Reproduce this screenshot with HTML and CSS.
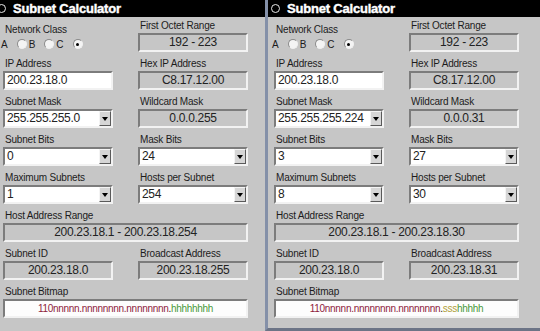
FILE: index.html
```html
<!DOCTYPE html>
<html lang="en">
  <head>
    <meta charset="UTF-8" />
    <meta name="viewport" content="width=device-width, initial-scale=1.0" />
    <title>Subnet Calculator</title>
    <link rel="stylesheet" href="styles.css">
  </head>
  <body>
    <div class="screens">
      <!-- class C, no subnetting -->
      <section class="calc calc-first">
        <div class="calc-title"><span class="calc-dot"></span>Subnet Calculator</div>
        <div class="calc-body">
          <div class="field net-class">
            <span class="label">Network Class</span>
            <div class="radios">
              <span>A</span><span class="radio"></span>
              <span>B</span><span class="radio"></span>
              <span>C</span><span class="radio checked"></span>
            </div>
          </div>
          <div class="field">
            <span class="label">First Octet Range</span>
            <div class="box">192 - 223</div>
          </div>

          <div class="field">
            <span class="label">IP Address</span>
            <div class="input">200.23.18.0</div>
          </div>
          <div class="field">
            <span class="label">Hex IP Address</span>
            <div class="box">C8.17.12.00</div>
          </div>

          <div class="field">
            <span class="label">Subnet Mask</span>
            <div class="select"><span>255.255.255.0</span><i class="arrow"></i></div>
          </div>
          <div class="field">
            <span class="label">Wildcard Mask</span>
            <div class="box">0.0.0.255</div>
          </div>

          <div class="field">
            <span class="label">Subnet Bits</span>
            <div class="select"><span>0</span><i class="arrow"></i></div>
          </div>
          <div class="field">
            <span class="label">Mask Bits</span>
            <div class="select"><span>24</span><i class="arrow"></i></div>
          </div>

          <div class="field">
            <span class="label">Maximum Subnets</span>
            <div class="select"><span>1</span><i class="arrow"></i></div>
          </div>
          <div class="field">
            <span class="label">Hosts per Subnet</span>
            <div class="select"><span>254</span><i class="arrow"></i></div>
          </div>

          <div class="field wide">
            <span class="label">Host Address Range</span>
            <div class="box">200.23.18.1 - 200.23.18.254</div>
          </div>

          <div class="field">
            <span class="label">Subnet ID</span>
            <div class="box">200.23.18.0</div>
          </div>
          <div class="field">
            <span class="label">Broadcast Address</span>
            <div class="box">200.23.18.255</div>
          </div>

          <div class="field wide">
            <span class="label">Subnet Bitmap</span>
            <div class="bitmap"><span class="bm-net">110nnnnn.nnnnnnnn.nnnnnnnn</span>.<span class="bm-host">hhhhhhhh</span></div>
          </div>
        </div>
      </section>

      <!-- class C, 3 subnet bits -->
      <section class="calc calc-second">
        <div class="calc-title"><span class="calc-dot"></span>Subnet Calculator</div>
        <div class="calc-body">
          <div class="field net-class">
            <span class="label">Network Class</span>
            <div class="radios">
              <span>A</span><span class="radio"></span>
              <span>B</span><span class="radio"></span>
              <span>C</span><span class="radio checked"></span>
            </div>
          </div>
          <div class="field">
            <span class="label">First Octet Range</span>
            <div class="box">192 - 223</div>
          </div>

          <div class="field">
            <span class="label">IP Address</span>
            <div class="input">200.23.18.0</div>
          </div>
          <div class="field">
            <span class="label">Hex IP Address</span>
            <div class="box">C8.17.12.00</div>
          </div>

          <div class="field">
            <span class="label">Subnet Mask</span>
            <div class="select"><span>255.255.255.224</span><i class="arrow"></i></div>
          </div>
          <div class="field">
            <span class="label">Wildcard Mask</span>
            <div class="box">0.0.0.31</div>
          </div>

          <div class="field">
            <span class="label">Subnet Bits</span>
            <div class="select"><span>3</span><i class="arrow"></i></div>
          </div>
          <div class="field">
            <span class="label">Mask Bits</span>
            <div class="select"><span>27</span><i class="arrow"></i></div>
          </div>

          <div class="field">
            <span class="label">Maximum Subnets</span>
            <div class="select"><span>8</span><i class="arrow"></i></div>
          </div>
          <div class="field">
            <span class="label">Hosts per Subnet</span>
            <div class="select"><span>30</span><i class="arrow"></i></div>
          </div>

          <div class="field wide">
            <span class="label">Host Address Range</span>
            <div class="box">200.23.18.1 - 200.23.18.30</div>
          </div>

          <div class="field">
            <span class="label">Subnet ID</span>
            <div class="box">200.23.18.0</div>
          </div>
          <div class="field">
            <span class="label">Broadcast Address</span>
            <div class="box">200.23.18.31</div>
          </div>

          <div class="field wide">
            <span class="label">Subnet Bitmap</span>
            <div class="bitmap"><span class="bm-net">110nnnnn.nnnnnnnn.nnnnnnnn</span>.<span class="bm-sub">sss</span><span class="bm-host">hhhhh</span></div>
          </div>
        </div>
      </section>
    </div>
  </body>
</html>
```

FILE: styles.css
```css
* {
  margin: 0;
  padding: 0;
  box-sizing: border-box;
}

body {
  font-family: 'Liberation Sans', Arial, sans-serif;
  background: #c6c6c6;
  width: 540px;
  height: 331px;
  overflow: hidden;
}

.screens {
  display: flex;
  height: 331px;
}

.calc {
  background: #c6c6c6;
  height: 100%;
}

.calc-first {
  width: 265px;
}

.calc-second {
  width: 275px;
  border-left: 3px solid #8490a8;
  border-bottom: 3px solid #6c7486;
}

.calc-title {
  display: flex;
  align-items: center;
  height: 17px;
  background: #000;
  color: #fff;
  font-weight: bold;
  font-size: 13px;
  letter-spacing: -0.2px;
  -webkit-text-stroke: 0.4px #fff;
}

.calc-dot {
  width: 9px;
  height: 9px;
  border: 1.5px solid #e8e8e8;
  border-radius: 50%;
  margin-right: 7px;
}

.calc-first .calc-dot {
  margin-left: -3px;
}

.calc-second .calc-dot {
  margin-left: 3px;
}

.calc-body {
  display: grid;
  grid-template-columns: 110px 110px;
  grid-auto-rows: 32px;
  column-gap: 25px;
  row-gap: 6px;
  padding-top: 3px;
}

.calc-first .calc-body {
  padding-left: 3px;
}

.calc-second .calc-body {
  padding-left: 6px;
}

.field {
  display: flex;
  flex-direction: column;
}

.field.wide {
  grid-column: 1 / 3;
}

.label {
  display: block;
  height: 12px;
  line-height: 12px;
  margin-bottom: 1px;
  padding-left: 2px;
  font-size: 10px;
  letter-spacing: -0.2px;
  color: #1c1c1c;
}

.net-class .label {
  margin-top: 4px;
}

.radios {
  display: flex;
  align-items: center;
  height: 12px;
  margin-top: 1px;
  margin-left: -2px;
  font-size: 10px;
  color: #1c1c1c;
}

.radios span:not(.radio) {
  margin-right: 9px;
}

.radio {
  width: 10px;
  height: 10px;
  margin-right: 2px;
  border-radius: 50%;
  background: #f4f4f4;
  border: 1px solid;
  border-color: #8a8a8a #f0f0f0 #f0f0f0 #8a8a8a;
  position: relative;
}

.radio.checked::after {
  content: '';
  position: absolute;
  left: 2.5px;
  top: 2.5px;
  width: 3px;
  height: 3px;
  border-radius: 50%;
  background: #000;
}

.box,
.input,
.select,
.bitmap {
  height: 19px;
  line-height: 15px;
  font-size: 12px;
  letter-spacing: -0.3px;
  color: #222;
  border: 2px solid;
  border-color: #7c7c7c #f2f2f2 #f2f2f2 #7c7c7c;
}

.box {
  background: #c6c6c6;
  text-align: center;
}

.input {
  background: #fff;
  padding-left: 2px;
}

.select {
  display: flex;
  justify-content: space-between;
  background: #fff;
  padding-left: 2px;
}

.arrow {
  position: relative;
  width: 12px;
  height: 15px;
  background: #d6d6d6;
  border: 1px solid;
  border-color: #f4f4f4 #5a5a5a #5a5a5a #f4f4f4;
}

.arrow::after {
  content: '';
  position: absolute;
  left: 2px;
  top: 5px;
  border-left: 3px solid transparent;
  border-right: 3px solid transparent;
  border-top: 4px solid #000;
}

.bitmap {
  background: #fdfdfd;
  text-align: center;
  font-size: 10px;
  letter-spacing: -0.3px;
}

.bm-net {
  color: #8e1c3c;
}

.bm-sub {
  color: #b0a038;
}

.bm-host {
  color: #4a9a3a;
}
```
